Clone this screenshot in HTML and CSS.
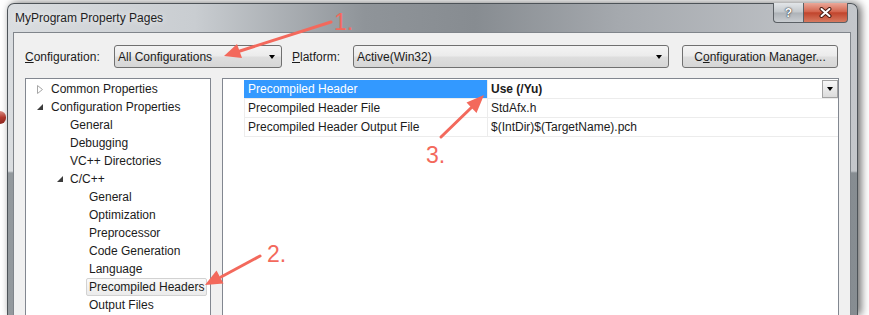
FILE: index.html
```html
<!DOCTYPE html>
<html lang="en">
  <head>
    <meta charset="UTF-8" />
    <title>MyProgram Property Pages</title>
    <link rel="stylesheet" href="styles.css">
  </head>
  <body>
    <div class="desk">
      <div class="behind"><span class="bubble"></span></div>

      <div class="window">
        <div class="titlebar">
          <span class="title">MyProgram Property Pages</span>
          <div class="caption">
            <span class="cap help">?</span>
            <span class="cap close">
              <svg width="13" height="11" viewBox="0 0 13 11">
                <path d="M2.5 2 L10.5 9 M10.5 2 L2.5 9" stroke="#4a1d14" stroke-width="4" stroke-linecap="round" />
                <path d="M2.5 2 L10.5 9 M10.5 2 L2.5 9" stroke="#fff" stroke-width="2" stroke-linecap="round" />
              </svg>
            </span>
          </div>
        </div>

        <div class="client">
          <div class="config-row">
            <label class="lbl lbl-config"><u>C</u>onfiguration:</label>
            <div class="combo combo-config">
              <span>All Configurations</span>
              <span class="caret"></span>
            </div>
            <label class="lbl lbl-platform"><u>P</u>latform:</label>
            <div class="combo combo-platform">
              <span>Active(Win32)</span>
              <span class="caret"></span>
            </div>
            <button class="btn">C<u>o</u>nfiguration Manager...</button>
          </div>

          <div class="panes">
            <ul class="tree">
              <li class="node lvl0">
                <span class="exp"><svg width="7" height="9" viewBox="0 0 7 9"><polygon points="0.5,0.5 5.5,4.5 0.5,8.5" fill="#fff" stroke="#a6a6a6" /></svg></span>
                Common Properties
              </li>
              <li class="node lvl0">
                <span class="exp"><svg width="6" height="6" viewBox="0 0 6 6"><polygon points="6,0 6,6 0,6" fill="#3c3c3c" /></svg></span>
                Configuration Properties
              </li>
              <li class="node lvl1"><span class="exp"></span>General</li>
              <li class="node lvl1"><span class="exp"></span>Debugging</li>
              <li class="node lvl1"><span class="exp"></span>VC++ Directories</li>
              <li class="node lvl1">
                <span class="exp"><svg width="6" height="6" viewBox="0 0 6 6"><polygon points="6,0 6,6 0,6" fill="#3c3c3c" /></svg></span>
                C/C++
              </li>
              <li class="node lvl2"><span class="exp"></span>General</li>
              <li class="node lvl2"><span class="exp"></span>Optimization</li>
              <li class="node lvl2"><span class="exp"></span>Preprocessor</li>
              <li class="node lvl2"><span class="exp"></span>Code Generation</li>
              <li class="node lvl2"><span class="exp"></span>Language</li>
              <li class="node lvl2"><span class="exp"></span><span class="selected">Precompiled Headers</span></li>
              <li class="node lvl2"><span class="exp"></span>Output Files</li>
            </ul>

            <div class="grid">
              <div class="prop active">
                <div class="prop-name">Precompiled Header</div>
                <div class="prop-value">
                  <b>Use (/Yu)</b>
                  <span class="dd"><span class="caret"></span></span>
                </div>
              </div>
              <div class="prop">
                <div class="prop-name">Precompiled Header File</div>
                <div class="prop-value">StdAfx.h</div>
              </div>
              <div class="prop">
                <div class="prop-name">Precompiled Header Output File</div>
                <div class="prop-value">$(IntDir)$(TargetName).pch</div>
              </div>
            </div>
          </div>
        </div>
      </div>
    </div>

    <!-- annotations drawn over the dialog -->
    <svg class="annot" width="869" height="315" viewBox="0 0 869 315">
      <g fill="#f3695c" stroke="#f3695c">
        <line x1="331" y1="22" x2="240" y2="51" stroke-width="3" stroke-linecap="round" />
        <polygon points="224,56 242,58 237,44" stroke="none" />

        <line x1="260" y1="256" x2="221" y2="277" stroke-width="3" stroke-linecap="round" />
        <polygon points="205,285 223.5,283.5 216.5,270.5" stroke="none" />

        <line x1="441" y1="137" x2="472" y2="107" stroke-width="3" stroke-linecap="round" />
        <polygon points="484,95 476.5,113 466.5,102.5" stroke="none" />
      </g>
      <g class="num">
        <text x="334" y="30">1.</text>
        <text x="267" y="262">2.</text>
        <text x="426" y="163">3.</text>
      </g>
    </svg>
  </body>
</html>
```

FILE: styles.css
```css
* {
  box-sizing: border-box;
}
body {
  margin: 0;
  width: 869px;
  height: 315px;
  overflow: hidden;
  position: relative;
  background: #fff;
  font-family: "Segoe UI", "Liberation Sans", Arial, sans-serif;
  font-size: 12px;
  color: #1b1b1b;
}
.desk {
  display: flex;
  height: 315px;
}
.behind {
  width: 7px;
  flex: none;
  padding-top: 111px;
}
.bubble {
  display: block;
  width: 6px;
  height: 13px;
  border-radius: 0 6px 6px 0;
  background: linear-gradient(#dc8f86, #b53a2f 50%, #8e2922);
}

/* window frame */
.window {
  flex: none;
  width: 851px;
  margin-top: 3px;
  padding: 0 6px 0 5px;
  display: flex;
  flex-direction: column;
  border: 1px solid #4d5358;
  border-bottom: none;
  border-radius: 7px 7px 0 0;
  background:
    linear-gradient(to bottom, rgba(0, 0, 0, 0) 167px, rgba(60, 70, 76, 0.45) 169px),
    linear-gradient(to right, #dadde0 0%, #c9cdd1 22%, #8f9499 42%, #878c91 55%, #a5a9ae 72%, #c4c7cb 100%);
  box-shadow: 3px 0 8px rgba(0, 0, 0, 0.6);
}
.titlebar {
  flex: none;
  height: 28px;
  display: flex;
  align-items: center;
  justify-content: space-between;
  padding-left: 2px;
}
.title {
  color: #1e1e1e;
  text-shadow: 0 0 6px rgba(255, 255, 255, 0.9);
}
.caption {
  align-self: flex-start;
  display: flex;
  margin-top: -1px;
  margin-right: 3px;
}
.cap {
  height: 20px;
  display: flex;
  align-items: center;
  justify-content: center;
  border: 1px solid #5b6065;
  border-top: none;
}
.help {
  width: 30px;
  border-right: none;
  border-radius: 0 0 0 4px;
  background: linear-gradient(#e2e5e8, #c3c8cc 48%, #adb2b7 52%, #c9cdd1);
  color: #fff;
  font-weight: bold;
  font-size: 12px;
  text-shadow: 0 0 2px #2b3035, 0 0 1px #2b3035;
}
.close {
  width: 45px;
  border-radius: 0 0 4px 0;
  background: linear-gradient(#eaa899, #d4664f 45%, #c1452d 52%, #d77a60);
}

/* client area, cut off by the bottom of the shot */
.client {
  flex: none;
  height: 283px;
  overflow: hidden;
  background: #f0f0f0;
  border: 1px solid #80858b;
  border-bottom: none;
  padding: 12px 11px 0 11px;
}
.config-row {
  display: flex;
  align-items: center;
  height: 23px;
}
.lbl-config {
  width: 89px;
}
.lbl-platform {
  width: 61px;
  margin-left: 10px;
}
.combo {
  height: 23px;
  display: flex;
  align-items: center;
  justify-content: space-between;
  padding: 0 6px 0 3px;
  border: 1px solid #707070;
  border-radius: 3px;
  background: linear-gradient(#f4f4f4, #ebebeb 48%, #dedede 52%, #d6d6d6);
}
.combo-config {
  width: 168px;
}
.combo-platform {
  width: 316px;
}
.caret {
  width: 0;
  height: 0;
  border-style: solid;
  border-width: 4px 3.5px 0;
  border-color: #000 transparent transparent;
}
.btn {
  margin-left: 13px;
  width: 156px;
  height: 23px;
  padding: 0;
  font: inherit;
  color: #1b1b1b;
  border: 1px solid #707070;
  border-radius: 3px;
  background: linear-gradient(#f4f4f4, #ebebeb 48%, #dedede 52%, #d6d6d6);
}

.panes {
  display: flex;
  gap: 11px;
  margin-top: 10px;
  height: 250px;
}

/* tree */
.tree {
  width: 186px;
  margin: 0;
  padding: 1px 0 0;
  list-style: none;
  background: #fff;
  border: 1px solid #828790;
}
.node {
  height: 18px;
  display: flex;
  align-items: center;
  white-space: nowrap;
}
.lvl0 {
  padding-left: 10px;
}
.lvl1 {
  padding-left: 29px;
}
.lvl2 {
  padding-left: 48px;
}
.exp {
  width: 15px;
  flex: none;
  display: flex;
  align-items: center;
  padding-left: 1px;
}
.lvl1 .exp {
  padding-left: 2px;
}
.selected {
  height: 18px;
  line-height: 16px;
  margin-left: -3px;
  padding: 0 2px;
  border: 1px solid #d2d2d2;
  border-radius: 2px;
  background: linear-gradient(#fafafa, #ebebeb);
}

/* property grid */
.grid {
  flex: 1;
  padding-top: 1px;
  background: #fff;
  border: 1px solid #828790;
}
.prop {
  display: flex;
  margin-left: 21px;
  height: 19px;
  border-bottom: 1px solid #ececec;
}
.prop-name {
  width: 244px;
  flex: none;
  display: flex;
  align-items: center;
  padding-left: 3px;
  border-left: 1px solid #ececec;
  border-right: 1px solid #ececec;
}
.prop-value {
  flex: 1;
  display: flex;
  align-items: center;
  justify-content: space-between;
  padding-left: 3px;
}
.active .prop-name {
  background: #3399ff;
  border-left-color: #3399ff;
  color: #fff;
}
.dd {
  width: 16px;
  height: 18px;
  display: flex;
  align-items: center;
  justify-content: center;
  border: 1px solid #a3a3a3;
  background: linear-gradient(#f7f7f7, #dcdcdc);
}

/* annotations */
.annot {
  position: absolute;
  top: 0;
  left: 0;
  pointer-events: none;
}
.num text {
  fill: #f3695c;
  font-family: "Liberation Sans", Arial, sans-serif;
  font-size: 23px;
}
```
